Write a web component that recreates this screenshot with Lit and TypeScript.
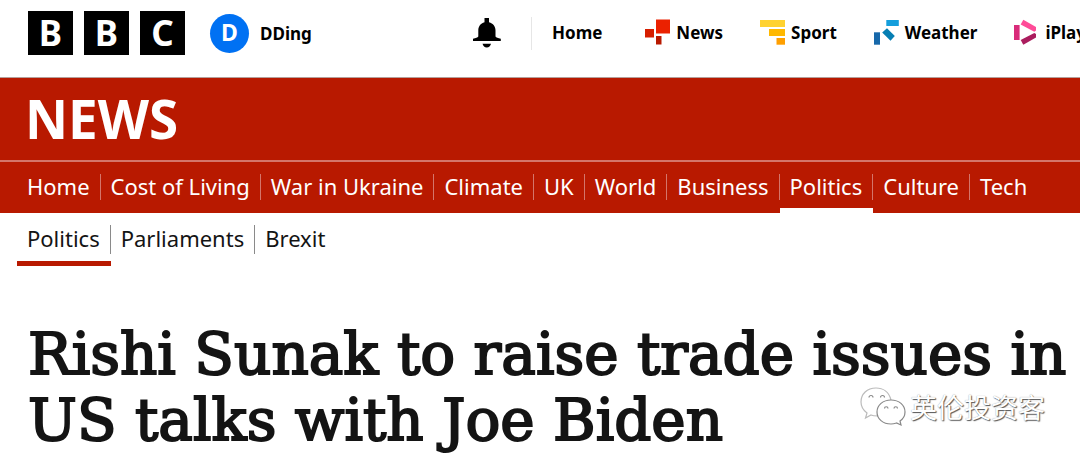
import { LitElement, html, css, svg } from "lit";
import { customElement } from "lit/decorators.js";
import { classMap } from "lit/directives/class-map.js";

const icons = {
  news: svg`
    <path fill="#eb2100" d="M11 0.5H25V14.500H11z"/>
    <path fill="#d61e00" d="M0 10H9V18.500H0z"/>
    <path fill="#b81900" d="M11 17H16.500V25.500H11z"/>`,
  sport: svg`
    <path fill="#ffd230" d="M0 1H25.500V8H0z"/>
    <path fill="#ffb800" d="M9 10H25.500V17H9z"/>
    <path fill="#ff9f00" d="M16.500 19H25.500V25.700H16.500z"/>`,
  weather: svg`
    <path fill="#149edc" d="M12.300 1H24.800V7H12.300z"/>
    <path fill="#067eb3" d="M8.200 13.500L13 9.200L20.800 17L16.500 21.700z"/>
    <path fill="#1768aa" d="M0 13.300H6V25.700H0z"/>`,
  iplayer: svg`
    <path fill="#ff4c98" d="M9.300 0.800L22 8V11.600L20.300 12.700L6.700 5.500z"/>
    <path fill="#d92b7a" d="M0 6H5.600V21H0z"/>
    <path fill="#ab1d5e" d="M20.300 14L22 15V18.500L9.300 25.800L6.700 21z"/>`,
};

const services = [
  { label: "Home", icon: null },
  { label: "News", icon: icons.news },
  { label: "Sport", icon: icons.sport },
  { label: "Weather", icon: icons.weather },
  { label: "iPlayer", icon: icons.iplayer },
];

const sections = ["Home", "Cost of Living", "War in Ukraine", "Climate", "UK", "World", "Business", "Politics", "Culture", "Tech"];
const topics = ["Politics", "Parliaments", "Brexit"];

@customElement("app-root")
export class AppRoot extends LitElement {
  static styles = css`
    :host {
      display: block;
      position: relative;
      overflow: hidden;
      background: #fff;
      color: #141414;
      font-family: "Noto Sans", "Open Sans", sans-serif;
    }
    a { color: inherit; text-decoration: none; white-space: nowrap; }
    ul { list-style: none; margin: 0; padding: 0; display: flex; }
    h1 { margin: 0; }
    svg { display: block; flex: none; }

    .topbar {
      display: flex;
      align-items: center;
      height: 66px;
      padding: 0 0 11px 28px;
      border-bottom: 1px solid #b5a09c;
      overflow: hidden;
      color: #000;
      font-size: 17px;
      font-weight: 700;
    }
    .logo { display: flex; gap: 11px; }
    .block {
      width: 45px;
      height: 44px;
      background: #000;
      color: #fff;
      font-size: 35px;
      line-height: 44px;
      text-align: center;
    }
    .account { display: flex; align-items: center; gap: 11px; margin-left: 25px; }
    .avatar {
      width: 39px;
      height: 39px;
      border-radius: 50%;
      background: #0071f3;
      color: #fff;
      font-size: 23px;
      line-height: 36px;
      text-align: center;
    }
    .services { display: flex; align-items: center; margin-left: auto; flex: none; }
    .bell { border: 0; padding: 0; background: none; margin-right: 30px; }
    .links {
      border-left: 1px solid #e6e6e6;
      padding-left: 20px;
      height: 33px;
      align-items: center;
      gap: 37px;
      width: 549px;
      box-sizing: border-box;
    }
    .service { display: flex; align-items: center; gap: 6px; line-height: 22px; }
    .links li:first-child { margin-right: 6px; }

    .masthead { background: #b81900; color: #fff; }
    .brand {
      padding: 0 25px;
      font-size: 53px;
      line-height: 82px;
      border-bottom: 2px solid #d4756a;
      font-weight: 700;
    }
    .sections { padding: 0 17px; font-size: 22px; }
    .section { position: relative; padding: 12px 0 13px; }
    .section a {
      display: block;
      padding: 0 10px 2px;
      line-height: 24px;
      border-right: 1px solid #d4756a;
    }
    .section:last-child a, .topic:last-child a { border-right: 0; }
    .active::after {
      content: "";
      position: absolute;
      left: 0;
      right: 0;
      bottom: 0;
      height: 5px;
      background: #fff;
    }
    .topics { padding: 0 17px; font-size: 22px; }
    .topic { position: relative; padding: 12px 0; }
    .topic a {
      display: block;
      padding: 0 10px 2px;
      line-height: 27px;
      border-right: 1px solid #8a8a8a;
    }
    .topic.active::after { background: #b81900; }

    .headline {
      padding: 55px 0 0 28px;
      font-family: "DejaVu Serif", serif;
      font-size: 58px;
      line-height: 66px;
      font-weight: 400;
      -webkit-text-stroke: 2px #141414;
    }
    .credit {
      position: absolute;
      right: 35px;
      bottom: 26px;
      display: flex;
      align-items: center;
      gap: 4px;
      color: #fff;
      font-family: "Noto Sans CJK SC", sans-serif;
      font-size: 27px;
      line-height: 32px;
      text-shadow: 1px 1px 1px #555, 0 0 1px #999;
    }
  `;

  render() {
    return html`
      <header>
        <div class="topbar">
          <a class="logo" href="#" aria-label="BBC">
            ${["B", "B", "C"].map((c) => html`<span class="block">${c}</span>`)}
          </a>
          <a class="account" href="#"><span class="avatar">D</span><span>DDing</span></a>
          <nav class="services" aria-label="BBC services">
            <button class="bell" aria-label="Notifications">
              <svg width="28" height="30" viewBox="0 0 28 30">
                <path d="M11.500 0H16V4.200C20.200 5.200 22.500 8.500 22.500 12.500V18.500C23.200 19.500 25 20.300 27.800 20.800V23H0V20.800C2.800 20.300 4.600 19.500 5.300 18.500V12.500C5.300 8.500 7.500 5.200 11.500 4.200zM9.500 25.700H18C17.400 28 16 29.600 13.800 29.600S10.100 28 9.500 25.700z"/>
              </svg>
            </button>
            <ul class="links">
              ${services.map((s) => html`<li><a class="service" href="#">
                ${s.icon ? html`<svg width="25" height="28" viewBox="0 0 25 28">${s.icon}</svg>` : ""}<span>${s.label}</span></a></li>`)}
            </ul>
          </nav>
        </div>
        <div class="masthead">
          <div class="brand">NEWS</div>
          <nav aria-label="News sections">
            <ul class="sections">
              ${sections.map((s) => html`<li class=${classMap({ section: true, active: s === "Politics" })}><a href="#">${s}</a></li>`)}
            </ul>
          </nav>
        </div>
        <nav aria-label="Topics">
          <ul class="topics">
            ${topics.map((s) => html`<li class=${classMap({ topic: true, active: s === "Politics" })}><a href="#">${s}</a></li>`)}
          </ul>
        </nav>
      </header>
      <main>
        <h1 class="headline">Rishi Sunak to raise trade issues in US talks with Joe Biden</h1>
      </main>
      <div class="credit">
        <svg width="46" height="40" viewBox="0 0 46 40" fill="#fff" stroke="#888" stroke-width="1.200">
          <path d="M31 13C29 5 23 1 16 1C7 1 1 7 1 15C1 20 3 23 7 26L5.500 31L11 28C13 29 15 29 18 29" stroke="#bbb"/>
          <path d="M31 13C23 13 17 18 17 25S23 37 31 37C33 37 35 36.500 36.500 36L41 38L40 34C43 32 45 29 45 25C45 18 39 13 31 13z"/>
          <path fill="none" d="M9 10.500A2 2 0 0 1 13 10.500M20.500 10.500A2 2 0 0 1 24.500 10.500M24.500 21.500A1.700 1.700 0 0 1 28 21.500M34 21.500A1.700 1.700 0 0 1 37.500 21.500"/>
        </svg>
        <span>英伦投资客</span>
      </div>
    `;
  }
}
